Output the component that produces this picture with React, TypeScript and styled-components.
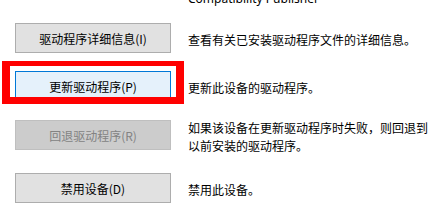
import styled, { createGlobalStyle } from "styled-components"

const GlobalStyle = createGlobalStyle`
  html, body {
    margin: 0;
    padding: 0;
    background: #ffffff;
  }
  body {
    font-family: "Noto Sans", "Noto Sans CJK SC", sans-serif;
    font-size: 12px;
    color: #000000;
  }
`

const StyledPage = styled.div`
  width: 436px;
  height: 213px;
  overflow: hidden;
  background: #ffffff;
  padding-left: 15px;
  box-sizing: border-box;
`

const PublisherLine = styled.div`
  margin-left: 173px;
  margin-top: -10px;
  height: 18px;
  line-height: 18px;
  font-size: 12px;
  color: #000;
  white-space: nowrap;
`

const ActionRow = styled.div<{ $space: number }>`
  position: relative;
  display: flex;
  align-items: center;
  height: 30px;
  margin-top: ${(p) => p.$space}px;
`

const ActionButton = styled.div<{ $state?: "normal" | "focused" | "disabled" }>`
  flex: 0 0 156px;
  height: 30px;
  box-sizing: border-box;
  display: flex;
  align-items: center;
  justify-content: center;
  font-family: "Noto Sans CJK SC", sans-serif;
  font-size: 12px;
  border: 1px solid
    ${(p) => (p.$state === "focused" ? "#0078d7" : p.$state === "disabled" ? "#bfbfbf" : "#adadad")};
  background: ${(p) => (p.$state === "focused" ? "#e5f1fb" : p.$state === "disabled" ? "#cccccc" : "#e1e1e1")};
  color: ${(p) => (p.$state === "disabled" ? "#838383" : "#000000")};
`

const Description = styled.div`
  margin-left: 17px;
  padding-top: 4px;
  width: 240px;
  font-family: "Noto Sans CJK SC", sans-serif;
  font-size: 12px;
  line-height: 18px;
  color: #000;
`

const Highlight = styled.div`
  position: absolute;
  left: -13px;
  top: -10px;
  width: 182px;
  height: 43px;
  box-sizing: border-box;
  border-style: solid;
  border-color: #ff0000;
  border-width: 5px 8px 7px 8px;
  pointer-events: none;
`

const actions = [
  { label: "驱动程序详细信息(I)", text: "查看有关已安装驱动程序文件的详细信息。", state: "normal", space: 15 },
  { label: "更新驱动程序(P)", text: "更新此设备的驱动程序。", state: "focused", space: 18, mark: true },
  { label: "回退驱动程序(R)", text: "如果该设备在更新驱动程序时失败，则回退到以前安装的驱动程序。", state: "disabled", space: 19 },
  { label: "禁用设备(D)", text: "禁用此设备。", state: "normal", space: 23 },
] as const

const App = () => {
  return (
    <>
      <GlobalStyle />
      <StyledPage>
        <PublisherLine>Compatibility Publisher</PublisherLine>
        {actions.map((a) => (
          <ActionRow key={a.label} $space={a.space}>
            <ActionButton $state={a.state}>{a.label}</ActionButton>
            <Description>{a.text}</Description>
            {"mark" in a && a.mark && <Highlight />}
          </ActionRow>
        ))}
      </StyledPage>
    </>
  )
}

export default App
